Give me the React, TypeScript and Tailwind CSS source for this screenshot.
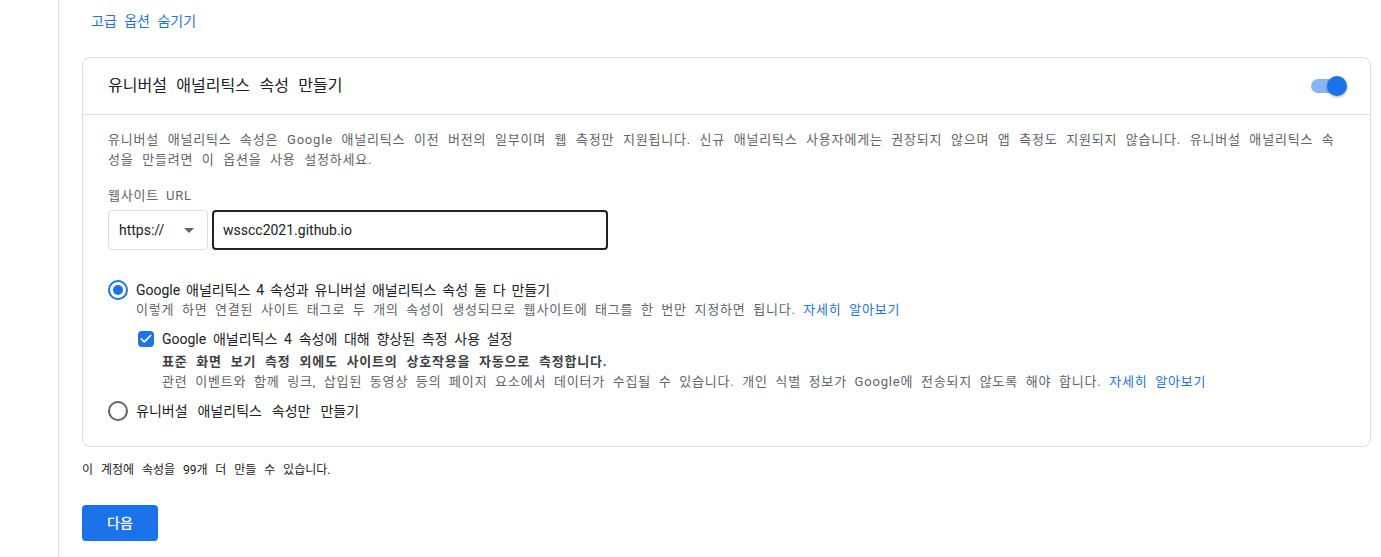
import { Check } from "lucide-react";

const font = { fontFamily: 'Roboto, "Noto Sans CJK KR", sans-serif' };

const Radio = ({ checked }: { checked?: boolean }) => (
  <span
    className={`flex h-5 w-5 shrink-0 items-center justify-center rounded-full border-2 ${
      checked ? "border-[#1a73e8]" : "border-[#5f6368]"
    }`}
  >
    {checked && <span className="h-2.5 w-2.5 rounded-full bg-[#1a73e8]" />}
  </span>
);

export default function App() {
  return (
    <div className="flex min-h-[557px] w-full bg-white text-[#202124]" style={font}>
      <div className="w-[59px] shrink-0 border-r border-[#dadce0]" />
      <div className="flex-1 pl-[23px] pr-[10px]">
        <div className="pl-[9px] pt-[11px] text-[14px] leading-5 text-[#1a73e8] [word-spacing:4px]">고급 옵션 숨기기</div>

        <div className="mt-[26px] rounded-lg border border-[#dadce0]">
          <div className="flex h-[57px] items-center justify-between border-b border-[#dadce0] px-[25px]">
            <span className="text-[16px] text-[#202124] [word-spacing:5.5px]">유니버설 애널리틱스 속성 만들기</span>
            <span className="relative mr-[-2px] flex h-5 w-9 items-center">
              <span className="h-[14px] w-[30px] rounded-full bg-[#8ab4f8]" />
              <span className="absolute right-0 h-5 w-5 rounded-full bg-[#1a73e8] shadow-[0_1px_3px_rgba(0,0,0,0.35)]" />
            </span>
          </div>

          <div className="px-[25px] pb-[25px] pt-[15px]">
            <p className="whitespace-nowrap text-[13px] leading-5 tracking-[0.8px] text-[#5f6368] [word-spacing:4.6px]">
              유니버설 애널리틱스 속성은 Google 애널리틱스 이전 버전의 일부이며 웹 측정만 지원됩니다. 신규 애널리틱스 사용자에게는 권장되지 않으며 앱 측정도 지원되지 않습니다. 유니버설 애널리틱스 속
              <br />
              성을 만들려면 이 옵션을 사용 설정하세요.
            </p>

            <div className="mt-4 text-[13px] leading-5 tracking-[0.8px] text-[#5f6368] [word-spacing:3px]">웹사이트 URL</div>
            <div className="mt-1 flex gap-1">
              <div className="flex h-10 w-[100px] items-center justify-between rounded border border-[#dadce0] pl-[10px] pr-[13px] text-[14px]">
                <span>https://</span>
                <span className="h-0 w-0 border-x-[5px] border-t-[5px] border-x-transparent border-t-[#5f6368]" />
              </div>
              <div className="flex h-10 w-[396px] items-center rounded border-2 border-[#202124] px-[9px] text-[14px]">
                wsscc2021.github.io
              </div>
            </div>

            <div className="mt-[30px] flex items-center gap-2 text-[14px] leading-5">
              <Radio checked />
              <span className="[word-spacing:2.4px]">Google 애널리틱스 4 속성과 유니버설 애널리틱스 속성 둘 다 만들기</span>
            </div>
            <div className="pl-7 text-[13px] leading-5 tracking-[0.8px] text-[#5f6368] [word-spacing:3.6px]">
              이렇게 하면 연결된 사이트 태그로 두 개의 속성이 생성되므로 웹사이트에 태그를 한 번만 지정하면 됩니다.{" "}
              <span className="text-[#1a73e8]">자세히 알아보기</span>
            </div>

            <div className="ml-[30px] mt-[9px] flex items-center gap-2 text-[14px] leading-5">
              <span className="flex h-4 w-4 items-center justify-center rounded-sm bg-[#1a73e8]">
                <Check className="h-3.5 w-3.5 text-white" strokeWidth={3} />
              </span>
              <span className="[word-spacing:3.25px]">Google 애널리틱스 4 속성에 대해 향상된 측정 사용 설정</span>
            </div>
            <div className="ml-[54px] mt-[3px] text-[13px] font-bold leading-5 tracking-[0.8px] text-[#3c4043] [word-spacing:4.8px]">
              표준 화면 보기 측정 외에도 사이트의 상호작용을 자동으로 측정합니다.
            </div>
            <div className="ml-[54px] text-[13px] leading-5 tracking-[0.8px] text-[#5f6368] [word-spacing:3.7px]">
              관련 이벤트와 함께 링크, 삽입된 동영상 등의 페이지 요소에서 데이터가 수집될 수 있습니다. 개인 식별 정보가 Google에 전송되지 않도록 해야 합니다.{" "}
              <span className="text-[#1a73e8]">자세히 알아보기</span>
            </div>

            <div className="mt-[9px] flex items-center gap-2 text-[14px] leading-5">
              <Radio />
              <span className="[word-spacing:6.5px]">유니버설 애널리틱스 속성만 만들기</span>
            </div>
          </div>
        </div>

        <div className="mt-[13px] text-[12px] leading-5 [word-spacing:4.9px]">이 계정에 속성을 99개 더 만들 수 있습니다.</div>
        <button className="mt-[25px] h-9 w-[76px] rounded bg-[#1a73e8] text-[14px] font-medium text-white">다음</button>
      </div>
    </div>
  );
}
